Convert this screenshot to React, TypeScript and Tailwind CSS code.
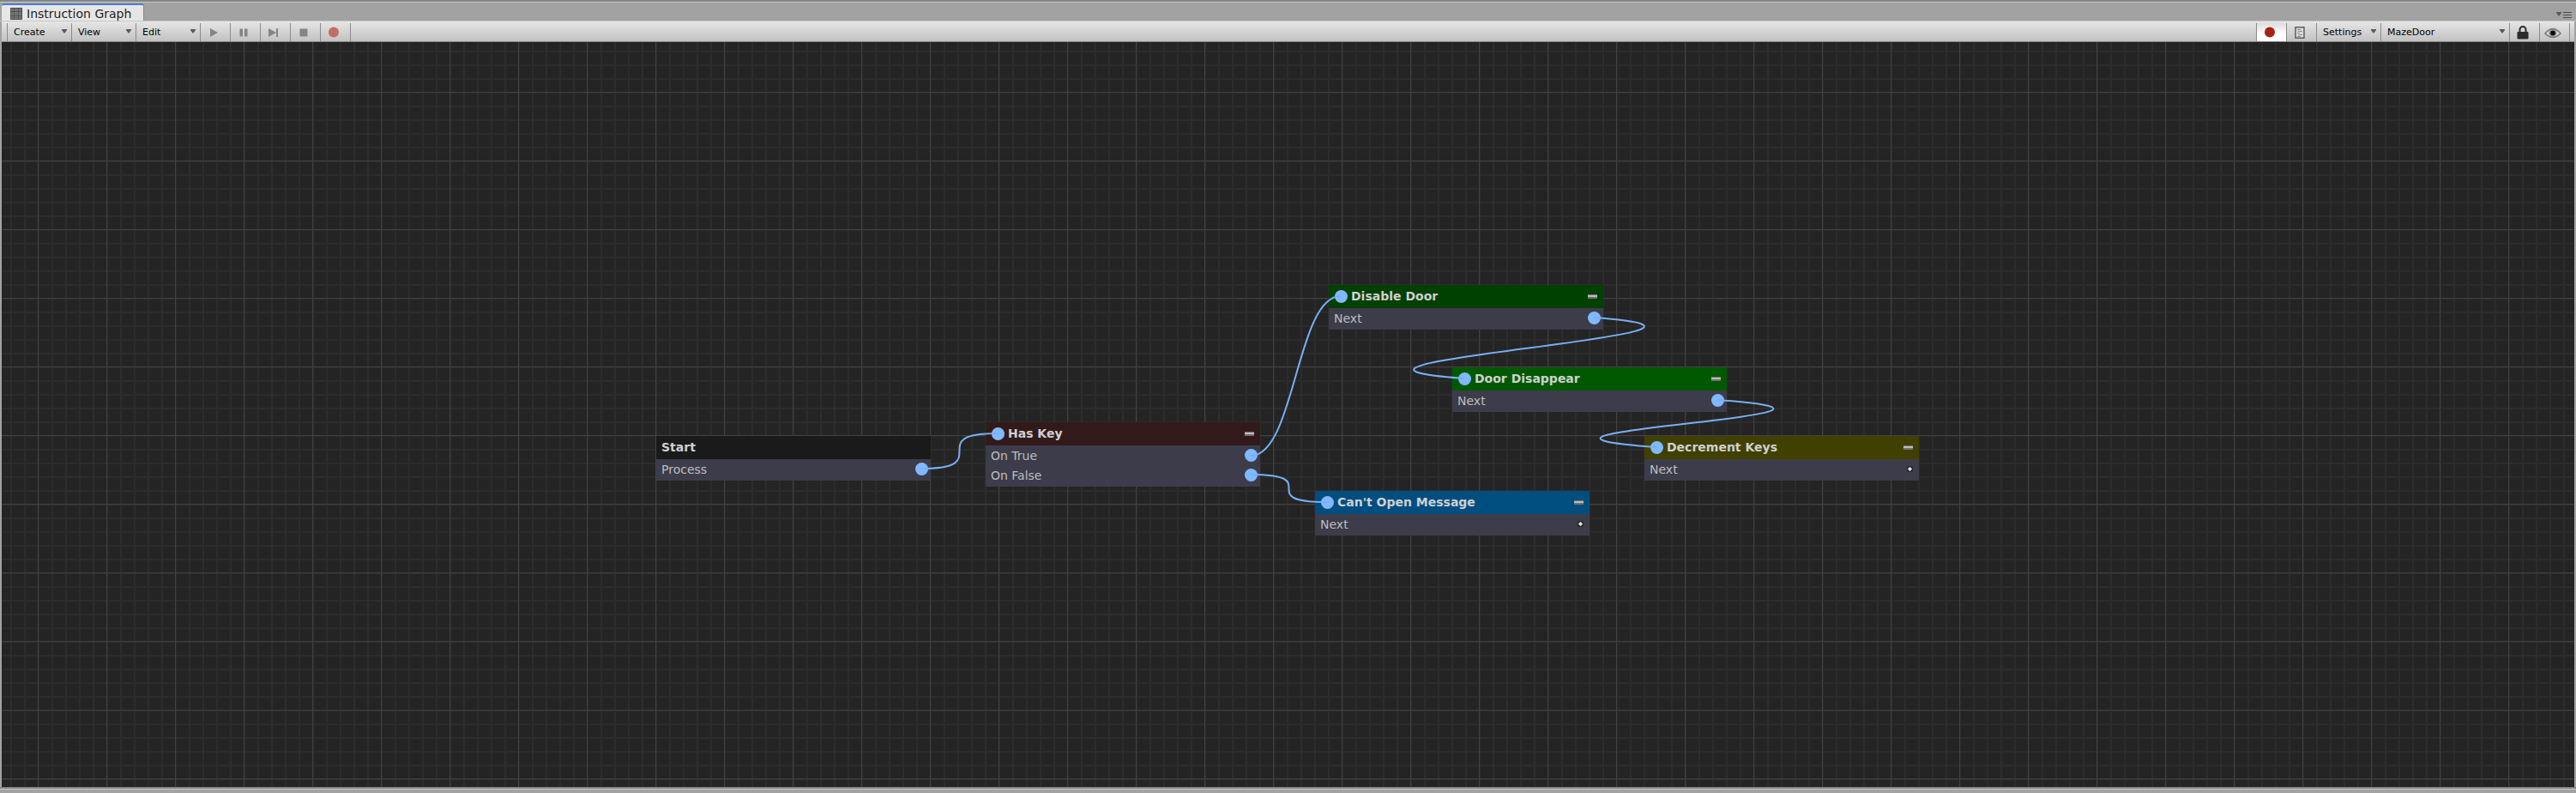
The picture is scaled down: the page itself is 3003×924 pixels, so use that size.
import type { ReactNode } from "react";

type Output = { label: string; linked: boolean };
type GraphNode = {
  title: string;
  position: string;
  header: string;
  input: boolean;
  outputs: Output[];
};

const nodes: GraphNode[] = [
  {
    title: "Start",
    position: "left-[763px] top-[459px]",
    header: "bg-[#1a1a1a]",
    input: false,
    outputs: [{ label: "Process", linked: true }],
  },
  {
    title: "Has Key",
    position: "left-[1147px] top-[443px]",
    header: "bg-[#331a1a]",
    input: true,
    outputs: [
      { label: "On True", linked: true },
      { label: "On False", linked: true },
    ],
  },
  {
    title: "Disable Door",
    position: "left-[1547px] top-[283px]",
    header: "bg-[#004000]",
    input: true,
    outputs: [{ label: "Next", linked: true }],
  },
  {
    title: "Door Disappear",
    position: "left-[1691px] top-[379px]",
    header: "bg-[#005900]",
    input: true,
    outputs: [{ label: "Next", linked: true }],
  },
  {
    title: "Decrement Keys",
    position: "left-[1915px] top-[459px]",
    header: "bg-[#404000]",
    input: true,
    outputs: [{ label: "Next", linked: false }],
  },
  {
    title: "Can't Open Message",
    position: "left-[1531px] top-[523px]",
    header: "bg-[#004d80]",
    input: true,
    outputs: [{ label: "Next", linked: false }],
  },
];

const links = [
  "M1072 497 C1161 497 1072 456 1161 456",
  "M1456 482 C1508 482 1509 296 1561 296",
  "M1456 504 C1545 504 1456 536 1545 536",
  "M1856 321 C2108 339 1453 374 1705 392",
  "M2000 417 C2252 435 1677 454 1929 472",
];

function Caret({ className = "" }: { className?: string }) {
  return (
    <svg viewBox="0 0 6 5" className={"h-[5px] w-[6px] " + className} aria-hidden="true">
      <path d="M0 0H6V1L3.5 4.5H2.5L0 1Z" fill="#5a5a5a" />
    </svg>
  );
}

function MenuButton({ label, width }: { label: string; width: string }) {
  return (
    <button
      type="button"
      className={
        "flex h-full items-center justify-between border-r border-[#8b8b8b] pt-[2px] pr-[5px] pl-[7px] text-[11px] text-black " +
        width
      }
    >
      <span>{label}</span>
      <Caret className="-mt-1" />
    </button>
  );
}

function IconButton({
  label,
  active = false,
  children,
}: {
  label: string;
  active?: boolean;
  children: ReactNode;
}) {
  return (
    <button
      type="button"
      aria-label={label}
      className={
        "flex h-full w-[35px] items-center justify-center border-r border-[#8b8b8b] pr-1 " +
        (active ? "bg-linear-to-b from-[#dedede] to-white to-60%" : "")
      }
    >
      {children}
    </button>
  );
}

function Port() {
  return <span className="block size-[15px] rounded-full bg-[#80b9ff]" />;
}

function NodeCard({ node }: { node: GraphNode }) {
  return (
    <section className={"absolute w-80 " + node.position}>
      <header
        className={
          "flex h-[27px] items-center justify-between pr-[7px] pb-px " +
          node.header +
          (node.input ? " pl-[7px]" : " pl-1.5")
        }
      >
        <div className="flex items-center gap-1">
          {node.input && <Port />}
          <h2 className="text-[14px] leading-5 font-bold text-[#d0d0d0]">{node.title}</h2>
        </div>
        {node.input && (
          <button
            type="button"
            aria-label={"Remove " + node.title}
            className="h-[5px] w-[11px] border-t border-b-2 border-black/40 bg-[#bcbcbc]"
          />
        )}
      </header>
      <ul className="bg-[#3c3c4a] pb-[2px]">
        {node.outputs.map((output) => (
          <li
            key={output.label}
            className={
              "flex h-[23px] items-center justify-between pl-1.5 " +
              (output.linked ? "pr-[3px]" : "pr-[7px]")
            }
          >
            <span className="text-[14px] leading-5 text-[#bebebe]">{output.label}</span>
            {output.linked ? (
              <Port />
            ) : (
              <svg viewBox="0 0 7 7" className="size-[7px]" aria-hidden="true">
                <rect width="7" height="7" rx="2" fill="#26262c" />
                <path d="M3.5 .8L6.2 3.5L3.5 6.2L.8 3.5Z" fill="#bbb" />
                <circle cx="3.5" cy="3.5" r="1.7" fill="#e0e0e0" />
              </svg>
            )}
          </li>
        ))}
      </ul>
    </section>
  );
}

function Grid() {
  return (
    <svg className="absolute inset-0 size-full" aria-hidden="true">
      <defs>
        <pattern id="minor" x="10" y="10" width="16" height="16" patternUnits="userSpaceOnUse">
          <path d="M1 0V16M0 1H16" stroke="#2c2c2c" strokeWidth="2" />
        </pattern>
        <pattern id="major" x="42" y="58" width="80" height="80" patternUnits="userSpaceOnUse">
          <path d="M.5 0V80M0 .5H80" stroke="#414141" strokeWidth="1" />
        </pattern>
      </defs>
      <rect width="100%" height="100%" fill="url(#minor)" />
      <rect width="100%" height="100%" fill="url(#major)" />
    </svg>
  );
}

export default function App() {
  return (
    <div className="flex h-screen flex-col overflow-hidden bg-[#a2a2a2] font-['DejaVu_Sans',sans-serif]">
      <div className="h-[3px] shrink-0 border-b border-[#c8c8c8] bg-[#858585]" />
      <div className="flex h-[22px] shrink-0 items-end justify-between border-b border-[#c8c8c8] pr-[5px] pl-[2px]">
        <div
          role="tab"
          aria-selected="true"
          className="flex h-5 w-[166px] items-center gap-[5px] rounded-t-[3px] border-t-2 border-r border-t-[#4a7fd6] border-r-[#8b8b8b] bg-[#e6e6e6] pt-px pl-2.5"
        >
          <svg viewBox="0 0 14 14" className="size-3.5" aria-hidden="true">
            <rect width="14" height="14" fill="#858585" />
            <path
              d="M.5 .5H13.5V13.5H.5ZM4.5 0V14M9.5 0V14M0 4.5H14M0 9.5H14"
              fill="none"
              stroke="#4a4a4a"
            />
            <path
              d="M2.5 0V14M7 0V14M11.5 0V14M0 2.5H14M0 7H14M0 11.5H14"
              stroke="#5c5c5c"
              strokeWidth=".6"
            />
          </svg>
          <h1 className="text-[14px] leading-4 whitespace-nowrap text-[#222]">Instruction Graph</h1>
        </div>
        <button type="button" aria-label="Window options" className="flex gap-[2px] pb-[3px]">
          <Caret />
          <svg viewBox="0 0 10 7" className="h-[7px] w-2.5" aria-hidden="true">
            <path d="M0 .5H10M0 3.5H10M0 6.5H10" stroke="#4c4c4c" />
          </svg>
        </button>
      </div>
      <div className="mx-[2px] flex h-6 shrink-0 items-stretch justify-between border-b border-[#8b8b8b] bg-linear-to-b from-[#e6e6e6] to-[#c2c2c2] pt-[2px]">
        <div className="flex border-l border-transparent pl-[5px]">
          <div className="flex border-l border-[#8b8b8b]">
            <MenuButton label="Create" width="w-[75px]" />
            <MenuButton label="View" width="w-[75px]" />
            <MenuButton label="Edit" width="w-[75px]" />
            <IconButton label="Play">
              <svg viewBox="0 0 16 16" className="size-4" aria-hidden="true">
                <path d="M4 3L13 8L4 13Z" fill="#848484" />
              </svg>
            </IconButton>
            <IconButton label="Pause">
              <svg viewBox="0 0 16 16" className="size-4" aria-hidden="true">
                <path d="M3.5 3.5H7V12.5H3.5ZM9 3.5H12.5V12.5H9Z" fill="#848484" />
              </svg>
            </IconButton>
            <IconButton label="Step">
              <svg viewBox="0 0 16 16" className="size-4" aria-hidden="true">
                <path d="M2 3L11 8L2 13ZM11 3H13V13H11Z" fill="#848484" />
              </svg>
            </IconButton>
            <IconButton label="Stop">
              <svg viewBox="0 0 16 16" className="size-4" aria-hidden="true">
                <path d="M3.5 3.5H12.5V12.5H3.5Z" fill="#848484" />
              </svg>
            </IconButton>
            <IconButton label="Record">
              <svg viewBox="0 0 16 16" className="size-4" aria-hidden="true">
                <circle cx="8" cy="7.5" r="6" fill="#c36c68" />
              </svg>
            </IconButton>
          </div>
        </div>
        <div className="flex border-r border-transparent pr-1">
          <div className="flex border-l border-[#8b8b8b]">
            <IconButton label="Breakpoints" active>
              <svg viewBox="0 0 16 16" className="size-4" aria-hidden="true">
                <circle cx="8" cy="7.5" r="6" fill="#a62117" />
              </svg>
            </IconButton>
            <IconButton label="Log">
              <svg viewBox="0 0 12 14" className="h-3.5 w-3" aria-hidden="true">
                <rect x="1" y=".75" width="10" height="12.5" fill="#dcdcdc" stroke="#4c4c4c" strokeWidth="1.3" />
                <path d="M3 3.5H7M4 5.5H9M3 7.5H6M4 9.5H9M3 11.5H7" stroke="#777" strokeWidth=".8" />
              </svg>
            </IconButton>
            <MenuButton label="Settings" width="w-[75px]" />
            <MenuButton label="MazeDoor" width="w-[150px]" />
            <IconButton label="Lock">
              <svg viewBox="0 0 14 16" className="h-4 w-3.5" aria-hidden="true">
                <path d="M3.5 8V4.5A3.5 3.5 0 0 1 10.5 4.5V8" fill="none" stroke="#2b2b2b" strokeWidth="2" />
                <rect x=".5" y="7" width="13" height="8.5" rx="1" fill="#2b2b2b" />
              </svg>
            </IconButton>
            <IconButton label="Preview">
              <svg viewBox="0 0 20 14" className="h-3.5 w-5" aria-hidden="true">
                <path d="M1 8Q10 -3 19 8Q10 17 1 8Z" fill="#d8d8d8" stroke="#777" strokeWidth="1.5" />
                <circle cx="10" cy="7.5" r="4.5" fill="#8a8a8a" />
                <circle cx="10" cy="7.5" r="2.8" fill="#0a0a0a" />
              </svg>
            </IconButton>
          </div>
        </div>
      </div>
      <main className="relative mx-[2px] grow overflow-hidden bg-[#242424]">
        <Grid />
        {nodes.map((node) => (
          <NodeCard key={node.title} node={node} />
        ))}
        <svg className="pointer-events-none absolute inset-0 size-full" aria-hidden="true">
          {links.map((d) => (
            <path key={d} d={d} fill="none" stroke="#78aff2" strokeWidth="2" />
          ))}
        </svg>
      </main>
      <footer className="flex h-[7px] shrink-0 flex-col bg-[#a2a2a2]">
        <div className="h-[3px] border-b border-[#c8c8c8] bg-[#858585]" />
      </footer>
    </div>
  );
}
